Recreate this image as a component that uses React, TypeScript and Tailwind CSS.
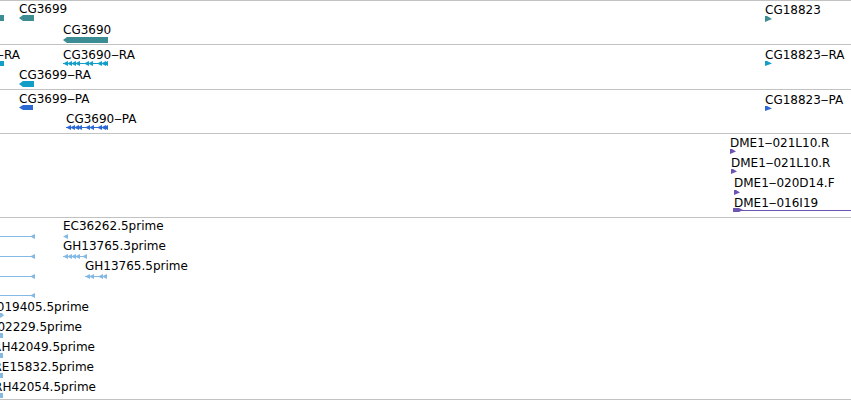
import React from "react";

const VIEW_W = 851;

const COLORS = {
  gene: "#3b8c93",
  ra: "#139ec8",
  pa: "#2c69d3",
  clone: "#6b55b1",
  est: "#83b9e2",
};

// left- or right-pointing solid arrow bar (gene / transcript glyph)
function ArrowBar({ w, h, color, dir = "left" }: { w: number; h: number; color: string; dir?: "left" | "right" }) {
  const m = h / 2;
  const pts =
    dir === "left"
      ? `0,${m} 4,0 ${w},0 ${w},${h} 4,${h}`
      : `0,0 ${w - 4},0 ${w},${m} ${w - 4},${h} 0,${h}`;
  return (
    <svg width={w} height={h} className="block">
      <polygon points={pts} fill={color} />
    </svg>
  );
}

// small right-pointing flag (short feature)
function Flag({ w, h, color }: { w: number; h: number; color: string }) {
  return (
    <svg width={w} height={h} className="block">
      <polygon points={`0,0 2,0 ${w},${h / 2} 0,${h}`} fill={color} />
    </svg>
  );
}

// intron line with left-pointing exon chevrons
function Exons({ w, h, color, at, line = true }: { w: number; h: number; color: string; at: number[]; line?: boolean }) {
  const m = h / 2;
  return (
    <svg width={w} height={h} className="block">
      {line && <rect x={0} y={Math.floor(m)} width={w} height={1} fill={color} />}
      {at.map((a) => (
        <polygon key={a} points={`${a},${m} ${a + 5},0 ${a + 5},${h}`} fill={color} />
      ))}
    </svg>
  );
}

function Block({ w, h, color }: { w: number; h: number; color: string }) {
  return <div className="block" style={{ width: w, height: h, background: color }} />;
}

type Feat = {
  label?: string;
  lx?: number; // label left
  rx?: number; // label right edge (labels running off the left side)
  ly?: number;
  gx: number;
  gy: number;
  glyph: React.ReactNode;
};

function Track({ className, feats }: { className: string; feats: Feat[] }) {
  return (
    <div className={className}>
      {feats.map((f, i) => (
        <React.Fragment key={i}>
          {f.label && (
            <div
              className="absolute whitespace-nowrap text-[12px] leading-[14px] text-black"
              style={
                f.rx !== undefined
                  ? { right: VIEW_W - f.rx, top: f.ly }
                  : { left: f.lx, top: f.ly }
              }
            >
              {f.label}
            </div>
          )}
          <div className="absolute" style={{ left: f.gx, top: f.gy }}>
            {f.glyph}
          </div>
        </React.Fragment>
      ))}
    </div>
  );
}

const genes: Feat[] = [
  { gx: 0, gy: 14, glyph: <Block w={4} h={6} color={COLORS.gene} /> },
  { label: "CG3699", lx: 19, ly: 1, gx: 19, gy: 14, glyph: <ArrowBar w={15} h={6} color={COLORS.gene} /> },
  { label: "CG3690", lx: 63, ly: 22, gx: 63, gy: 36, glyph: <ArrowBar w={45} h={6} color={COLORS.gene} /> },
  { label: "CG18823", lx: 765, ly: 2, gx: 765, gy: 15, glyph: <Flag w={7} h={6} color={COLORS.gene} /> },
];

const mrnaRA: Feat[] = [
  { label: "CG3703‒RA", rx: 20, ly: 3, gx: 0, gy: 16, glyph: <Block w={4} h={5} color={COLORS.ra} /> },
  {
    label: "CG3690‒RA",
    lx: 63,
    ly: 3,
    gx: 63,
    gy: 16,
    glyph: <Exons w={45} h={5} color={COLORS.ra} at={[0, 4, 8, 12, 21, 25, 34, 38, 40]} />,
  },
  { label: "CG3699‒RA", lx: 19, ly: 23, gx: 19, gy: 36, glyph: <ArrowBar w={15} h={6} color={COLORS.ra} /> },
  { label: "CG18823‒RA", lx: 765, ly: 3, gx: 765, gy: 16, glyph: <Flag w={7} h={5} color={COLORS.ra} /> },
];

const mrnaPA: Feat[] = [
  { label: "CG3699‒PA", lx: 19, ly: 2, gx: 19, gy: 15, glyph: <ArrowBar w={14} h={5} color={COLORS.pa} /> },
  {
    label: "CG3690‒PA",
    lx: 66,
    ly: 22,
    gx: 66,
    gy: 35,
    glyph: <Exons w={42} h={5} color={COLORS.pa} at={[0, 4, 8, 11, 19, 23, 31, 35, 37]} />,
  },
  { label: "CG18823‒PA", lx: 765, ly: 3, gx: 765, gy: 16, glyph: <Flag w={7} h={5} color={COLORS.pa} /> },
];

const clones: Feat[] = [
  { label: "DME1‒021L10.R", lx: 730, ly: 2, gx: 730, gy: 15, glyph: <Flag w={6} h={5} color={COLORS.clone} /> },
  { label: "DME1‒021L10.R", lx: 731, ly: 22, gx: 731, gy: 35, glyph: <Flag w={6} h={5} color={COLORS.clone} /> },
  { label: "DME1‒020D14.F", lx: 734, ly: 42, gx: 734, gy: 56, glyph: <Flag w={6} h={5} color={COLORS.clone} /> },
  {
    label: "DME1‒016I19",
    lx: 734,
    ly: 62,
    gx: 733,
    gy: 73,
    glyph: (
      <svg width={118} height={6} className="block">
        <polygon points="0,1 6,1 10,3 6,5 0,5" fill={COLORS.clone} />
        <rect x={0} y={3} width={118} height={1} fill={COLORS.clone} />
      </svg>
    ),
  },
];

const estLine = <Exons w={35} h={5} color={COLORS.est} at={[30]} />;

const ests: Feat[] = [
  { gx: 0, gy: 16, glyph: estLine },
  { gx: 0, gy: 36, glyph: estLine },
  { gx: 0, gy: 56, glyph: estLine },
  { gx: 0, gy: 75, glyph: estLine },
  { label: "EC36262.5prime", lx: 63, ly: 1, gx: 63, gy: 16, glyph: <Exons w={5} h={5} color={COLORS.est} at={[0]} line={false} /> },
  {
    label: "GH13765.3prime",
    lx: 63,
    ly: 21,
    gx: 63,
    gy: 36,
    glyph: <Exons w={24} h={5} color={COLORS.est} at={[0, 4, 8, 12, 19]} />,
  },
  {
    label: "GH13765.5prime",
    lx: 85,
    ly: 41,
    gx: 85,
    gy: 56,
    glyph: <Exons w={22} h={5} color={COLORS.est} at={[0, 4, 13, 17]} />,
  },
  { label: "LP019405.5prime", rx: 89, ly: 82, gx: 0, gy: 95, glyph: <Flag w={4} h={5} color={COLORS.est} /> },
  { label: "LD02229.5prime", rx: 82, ly: 102, gx: 0, gy: 115, glyph: <Block w={3} h={5} color={COLORS.est} /> },
  { label: "RH42049.5prime", rx: 95, ly: 122, gx: 0, gy: 135, glyph: <Block w={3} h={5} color={COLORS.est} /> },
  { label: "RE15832.5prime", rx: 94, ly: 142, gx: 0, gy: 155, glyph: <Block w={3} h={5} color={COLORS.est} /> },
  { label: "RH42054.5prime", rx: 96, ly: 162, gx: 0, gy: 175, glyph: <Block w={3} h={5} color={COLORS.est} /> },
];

export default function App() {
  return (
    <div className="flex h-[401px] w-[851px] flex-col overflow-hidden bg-white font-['DejaVu_Sans',sans-serif]">
      <Track className="relative h-[44px] shrink-0 overflow-hidden border-t border-[#c2c2c2]" feats={genes} />
      <Track className="relative h-[45px] shrink-0 overflow-hidden border-t border-[#c2c2c2]" feats={mrnaRA} />
      <Track className="relative h-[44px] shrink-0 overflow-hidden border-t border-[#c2c2c2]" feats={mrnaPA} />
      <Track className="relative h-[84px] shrink-0 overflow-hidden border-t border-[#c2c2c2]" feats={clones} />
      <Track className="relative h-[183px] shrink-0 overflow-hidden border-y border-[#c2c2c2]" feats={ests} />
    </div>
  );
}
